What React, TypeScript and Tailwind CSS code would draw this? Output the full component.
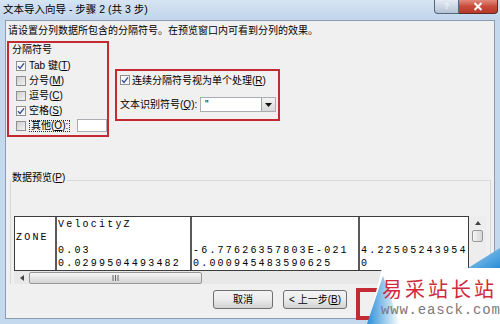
import React from 'react';

const UI_FONT = "font-['Liberation_Sans','Noto_Sans_CJK_SC',sans-serif]";
const MONO = "font-['Liberation_Mono','DejaVu_Sans_Mono',monospace]";

function CheckBox({ checked }: { checked?: boolean }) {
  return (
    <span
      className={`flex h-[10px] w-[10px] shrink-0 items-center justify-center border border-[#8e8f8f] ${
        checked ? 'bg-[#f6f6f6]' : 'bg-linear-to-br from-[#cfcfcf] to-[#f2f2f2]'
      }`}
    >
      {checked && (
        <svg width="8" height="8" viewBox="0 0 8 8">
          <path d="M1 4.3 L3 6.4 L7 1.4" fill="none" stroke="#3b5598" strokeWidth="1.5" />
        </svg>
      )}
    </span>
  );
}

function Hot({ label, hot, tail = '' }: { label: string; hot: string; tail?: string }) {
  return (
    <span className="whitespace-nowrap">
      {label}(<span className="underline">{hot}</span>){tail}
    </span>
  );
}

const delimiters = [
  { label: 'Tab 键', hot: 'T', checked: true },
  { label: '分号', hot: 'M', checked: false },
  { label: '逗号', hot: 'C', checked: false },
  { label: '空格', hot: 'S', checked: true },
];

const columns = [
  { w: 'w-[42px]', lines: ['', 'ZONE', '', ''] },
  { w: 'w-[135px]', lines: ['VelocityZ', '', '0.03', '0.0299504493482'] },
  { w: 'w-[168px]', lines: ['', '', '-6.77626357803E-021', '0.000945483590625'] },
  { w: 'w-[108px]', lines: ['', '', '4.22505243954', '0'] },
];
const rowHeights = ['h-[14px]', 'h-[15px]', 'h-[13px]', 'h-[13px]'];

function Button({ children, w }: { children?: React.ReactNode; w: string }) {
  return (
    <div
      className={`${w} flex h-[19px] shrink-0 items-center justify-center rounded-[3px] border border-[#707070] bg-linear-to-b from-[#f4f4f4] via-[#ebebeb] to-[#d2d2d2] text-[10px] leading-none text-black`}
    >
      {children}
    </div>
  );
}

export default function App() {
  return (
    <div className={`relative h-[324px] w-[500px] overflow-hidden bg-[#c4d8ee] ${UI_FONT}`}>
      {/* title bar */}
      <div className="flex h-[20px] items-start justify-between bg-linear-to-b from-[#d6e4f3] to-[#c1d5eb] pl-[3px] pr-[2px]">
        <span className="pt-[2px] text-[10.5px] leading-[14px] text-black">文本导入向导 - 步骤 2 (共 3 步)</span>
        <div className="flex">
          <div className="flex h-[14px] w-[25px] items-center justify-center rounded-bl-[4px] border border-t-0 border-[#56677c] bg-linear-to-b from-[#e4ebf3] to-[#b4c3d5] text-[9px] font-bold leading-none text-[#eef2f7]">
            ?
          </div>
          <div className="flex h-[14px] w-[39px] items-center justify-center rounded-br-[4px] border border-l-0 border-t-0 border-[#5b2a25] bg-linear-to-b from-[#e08a7c] via-[#c74a3a] to-[#b8392a]">
            <svg width="10" height="9" viewBox="0 0 10 9">
              <path d="M1.5 1 L8.5 8 M8.5 1 L1.5 8" stroke="#ffffff" strokeWidth="2" />
            </svg>
          </div>
        </div>
      </div>

      {/* dialog body */}
      <div className="mx-[5px] flex h-[299px] flex-col border border-[#8d9db1] bg-[#f0f0f0] text-[10px] text-black">
        <p className="mt-[3px] pl-[2px] leading-[14px]">
          请设置分列数据所包含的分隔符号。在预览窗口内可看到分列的效果。
        </p>

        <div className="mt-[3px] flex items-start">
          {/* delimiters */}
          <div className="ml-[1px] flex h-[96px] w-[102px] flex-col border-2 border-[#c42a31] pl-[7px]">
            <span className="-ml-[4px] leading-[14px]">分隔符号</span>
            <div className="mt-[1px] flex flex-col">
              {delimiters.map((d) => (
                <div key={d.hot} className="flex h-[15px] items-center gap-[3px]">
                  <CheckBox checked={d.checked} />
                  <Hot label={d.label} hot={d.hot} />
                </div>
              ))}
              <div className="flex h-[15px] items-center gap-[3px]">
                <CheckBox />
                <span className="border border-dotted border-[#333] px-px leading-[10px]">
                  <Hot label="其他" hot="O" tail=":" />
                </span>
                <span className="ml-[4px] h-[13px] w-[30px] border border-[#abadb3] bg-white" />
              </div>
            </div>
          </div>

          {/* consecutive / qualifier */}
          <div className="ml-[6px] mt-[28px] flex h-[52px] w-[165px] flex-col border-2 border-[#c42a31] pl-[3px] pr-[2px]">
            <div className="mt-[2px] flex h-[14px] items-center gap-[2px]">
              <CheckBox checked />
              <Hot label="连续分隔符号视为单个处理" hot="R" />
            </div>
            <div className="mt-[10px] flex h-[15px] items-center justify-between">
              <Hot label="文本识别符号" hot="Q" tail=":" />
              <div className="flex h-[15px] w-[76px] items-stretch border border-[#abadb3] bg-white">
                <span className="flex-1 pl-[4px] leading-[13px]">"</span>
                <span className="flex w-[14px] items-center justify-center border-l border-[#9da3ad] bg-linear-to-b from-[#f3f3f3] to-[#d9d9d9]">
                  <svg width="7" height="4" viewBox="0 0 7 4">
                    <path d="M0 0 L7 0 L3.5 4 Z" fill="#111" />
                  </svg>
                </span>
              </div>
            </div>
          </div>
        </div>

        {/* data preview group */}
        <div className="ml-[4px] mt-[43px] flex h-[112px] w-[481px] flex-col border border-b-0 border-[#d5d8dc]">
          <span className="-mt-[10px] ml-px w-fit bg-[#f0f0f0] pr-[2px] leading-[14px]">
            <Hot label="数据预览" hot="P" />
          </span>
          <div className="ml-[3px] mt-[31px] flex items-start">
            <div className="flex flex-col">
              <div className={`flex h-[55px] w-[455px] overflow-hidden border border-[#3c3c3c] bg-white ${MONO} text-[10px] tracking-[2.2px]`}>
                {columns.map((c, i) => (
                  <div
                    key={i}
                    className={`${c.w} flex shrink-0 flex-col overflow-hidden whitespace-nowrap pl-px ${
                      i < columns.length - 1 ? 'border-r-2 border-[#5a5a5a]' : ''
                    }`}
                  >
                    {c.lines.map((line, j) => (
                      <div key={j} className={`${rowHeights[j]} flex items-center`}>
                        {line}
                      </div>
                    ))}
                  </div>
                ))}
              </div>
              {/* horizontal scrollbar */}
              <div className="flex h-[13px] w-[455px] items-center bg-[#e8e8e8]">
                <div className="flex w-[15px] justify-center">
                  <svg width="4" height="6" viewBox="0 0 4 6">
                    <path d="M4 0 L0 3 L4 6 Z" fill="#444" />
                  </svg>
                </div>
                <div className="flex h-[12px] w-[173px] items-center justify-center rounded-[2px] border border-[#979797] bg-linear-to-b from-[#f5f5f5] to-[#d4d4d4]">
                  <svg width="7" height="6" viewBox="0 0 7 6">
                    <path d="M1 0 V6 M3.5 0 V6 M6 0 V6" stroke="#666" strokeWidth="1" />
                  </svg>
                </div>
              </div>
            </div>
            {/* vertical scrollbar */}
            <div className="flex h-[68px] w-[17px] flex-col items-center bg-[#ededed]">
              <svg className="mt-[5px]" width="6" height="4" viewBox="0 0 6 4">
                <path d="M0 4 L3 0 L6 4 Z" fill="#444" />
              </svg>
              <div className="mt-[5px] h-[12px] w-[11px] rounded-[2px] border border-[#979797] bg-linear-to-r from-[#f4f4f4] to-[#d6d6d6]" />
            </div>
          </div>
        </div>

        {/* buttons; the next button sits under the watermark */}
        <div className="ml-[207px] mt-[6px] flex items-start">
          <Button w="w-[60px]">取消</Button>
          <div className="ml-[10px]">
            <Button w="w-[64px]">&lt; 上一步(<span className="underline">B</span>)</Button>
          </div>
          <div className="-mt-[2px] ml-[9px] flex h-[32px] w-[110px] shrink-0 items-start justify-center border-4 border-[#c42a31] pt-[1px]">
            <Button w="w-[64px]" />
          </div>
        </div>
      </div>

      {/* site watermark */}
      <div className="absolute left-[360px] top-[246px] h-[78px] w-[140px]">
        <svg className="absolute inset-0" width="140" height="78" viewBox="0 0 140 78">
          <defs>
            <linearGradient id="wmL" x1="0" y1="0" x2="1" y2="0">
              <stop offset="0" stopColor="#2a8fd8" />
              <stop offset="1" stopColor="#ffffff" />
            </linearGradient>
            <linearGradient id="wmR" x1="0" y1="0" x2="1" y2="1">
              <stop offset="0" stopColor="#9fd0f2" />
              <stop offset="1" stopColor="#2b8ed6" />
            </linearGradient>
          </defs>
          <polygon points="22,22 140,22 140,78 8,78" fill="#ffffff" />
          <polygon points="7,78 23,30 40,78" fill="url(#wmL)" />
          <polygon points="108,22 140,2 140,22" fill="url(#wmR)" />
        </svg>
        <div className="absolute left-[22px] top-[33px] h-[20px] whitespace-nowrap font-['Noto_Sans_CJK_SC',sans-serif] text-[20px] leading-[20px] tracking-[3px] text-[#d02a3c]">
          易采站长站
        </div>
        <div className="absolute left-[21px] top-[57px] h-[14px] whitespace-nowrap font-['Liberation_Mono',monospace] text-[14px] leading-[14px] tracking-[0.8px] text-[#7a7a7a]">
          www.easck.com
        </div>
      </div>
    </div>
  );
}
